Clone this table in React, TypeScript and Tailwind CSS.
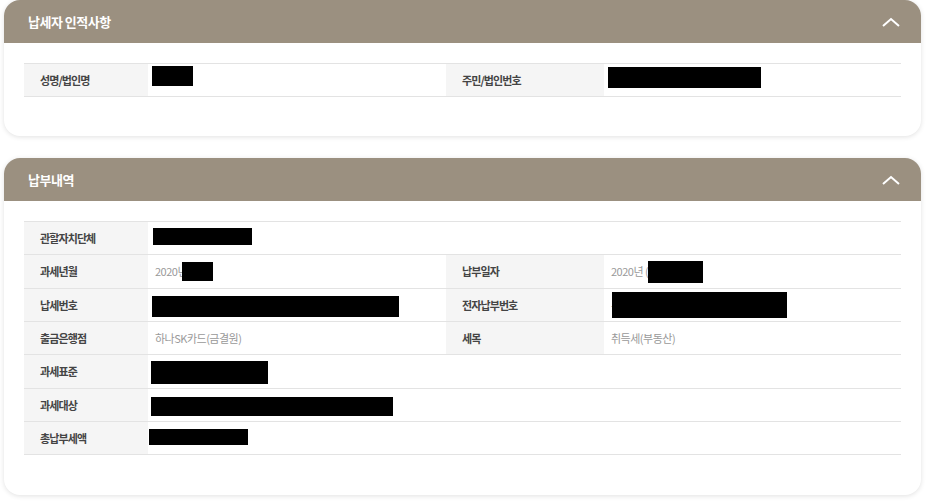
const font = { fontFamily: '"Noto Sans CJK KR", "Noto Sans", sans-serif' };

function Chevron() {
    return (
        <svg width="20" height="12" viewBox="0 0 20 12" className="mr-[20px]">
            <polyline points="2,10 10,3 18,10" fill="none" stroke="#ffffff" strokeWidth="2" />
        </svg>
    );
}

function Redact({ w, h, mt, ml = 0 }: { w: number; h: number; mt: number; ml?: number }) {
    return <div className="shrink-0 bg-black" style={{ width: w, height: h, marginTop: mt, marginLeft: ml }} />;
}

function Label({ children }: { children: React.ReactNode }) {
    return (
        <div className="flex items-center bg-[#f5f5f5] pl-[16px] text-[11px] font-bold tracking-[-0.9px] text-[#444]">
            {children}
        </div>
    );
}

function Card({ title, children, bodyClass }: { title: string; children: React.ReactNode; bodyClass: string }) {
    return (
        <section className="w-[917px] overflow-hidden rounded-[16px] bg-white shadow-[0_1px_5px_rgba(0,0,0,0.12)]">
            <header className="flex h-[43px] items-center justify-between bg-[#9b9080] pl-[24px]">
                <h2 className="text-[13px] font-bold tracking-[-0.5px] text-white">{title}</h2>
                <Chevron />
            </header>
            <div className={bodyClass}>{children}</div>
        </section>
    );
}

const row = "grid h-[33px] grid-cols-[124px_298px_158px_298px] border-b border-[#e3e3e3]";
const rowTall = "grid h-[34px] grid-cols-[124px_298px_158px_298px] border-b border-[#e3e3e3]";
const val = "flex items-start pl-[4px] text-[11px] text-[#999]";
const valText = "flex items-center pl-[7px] text-[11px] tracking-[-0.5px] text-[#999]";

export default function App() {
    return (
        <div className="flex min-h-[504px] flex-col gap-[22px] bg-white pl-[4px]" style={font}>
            <Card title="납세자 인적사항" bodyClass="px-[20px] pb-[39px] pt-[20px]">
                <div className="grid h-[34px] grid-cols-[124px_298px_158px_298px] border-y border-[#e3e3e3]">
                    <Label>성명/법인명</Label>
                    <div className={val}>
                        <Redact w={41} h={20} mt={2} />
                    </div>
                    <Label>주민/법인번호</Label>
                    <div className={val}>
                        <Redact w={153} h={21} mt={3} />
                    </div>
                </div>
            </Card>

            <Card title="납부내역" bodyClass="px-[20px] pb-[40px] pt-[20px]">
                <div className="border-t border-[#e3e3e3]">
                    <div className={row}>
                        <Label>관할자치단체</Label>
                        <div className={`${val} col-span-3`}>
                            <Redact w={99} h={17} mt={6} ml={1} />
                        </div>
                    </div>
                    <div className={rowTall}>
                        <Label>과세년월</Label>
                        <div className={valText}>
                            <span>2020년</span>
                            <Redact w={31} h={19} mt={0} ml={-5} />
                        </div>
                        <Label>납부일자</Label>
                        <div className={valText}>
                            <span>2020년 (</span>
                            <Redact w={55} h={22} mt={0} ml={0} />
                        </div>
                    </div>
                    <div className={row}>
                        <Label>납세번호</Label>
                        <div className={val}>
                            <Redact w={247} h={21} mt={7} />
                        </div>
                        <Label>전자납부번호</Label>
                        <div className={valText}>
                            <span>-</span>
                            <Redact w={175} h={26} mt={0} ml={-2} />
                        </div>
                    </div>
                    <div className={row}>
                        <Label>출금은행점</Label>
                        <div className={valText}>하나SK카드(금결원)</div>
                        <Label>세목</Label>
                        <div className={valText}>취득세(부동산)</div>
                    </div>
                    <div className={rowTall}>
                        <Label>과세표준</Label>
                        <div className={`${val} col-span-3`}>
                            <Redact w={117} h={23} mt={6} ml={-1} />
                        </div>
                    </div>
                    <div className={row}>
                        <Label>과세대상</Label>
                        <div className={`${val} col-span-3`}>
                            <Redact w={242} h={19} mt={8} ml={-1} />
                        </div>
                    </div>
                    <div className={row}>
                        <Label>총납부세액</Label>
                        <div className={`${val} col-span-3`}>
                            <Redact w={99} h={16} mt={7} ml={-3} />
                        </div>
                    </div>
                </div>
            </Card>
        </div>
    );
}
